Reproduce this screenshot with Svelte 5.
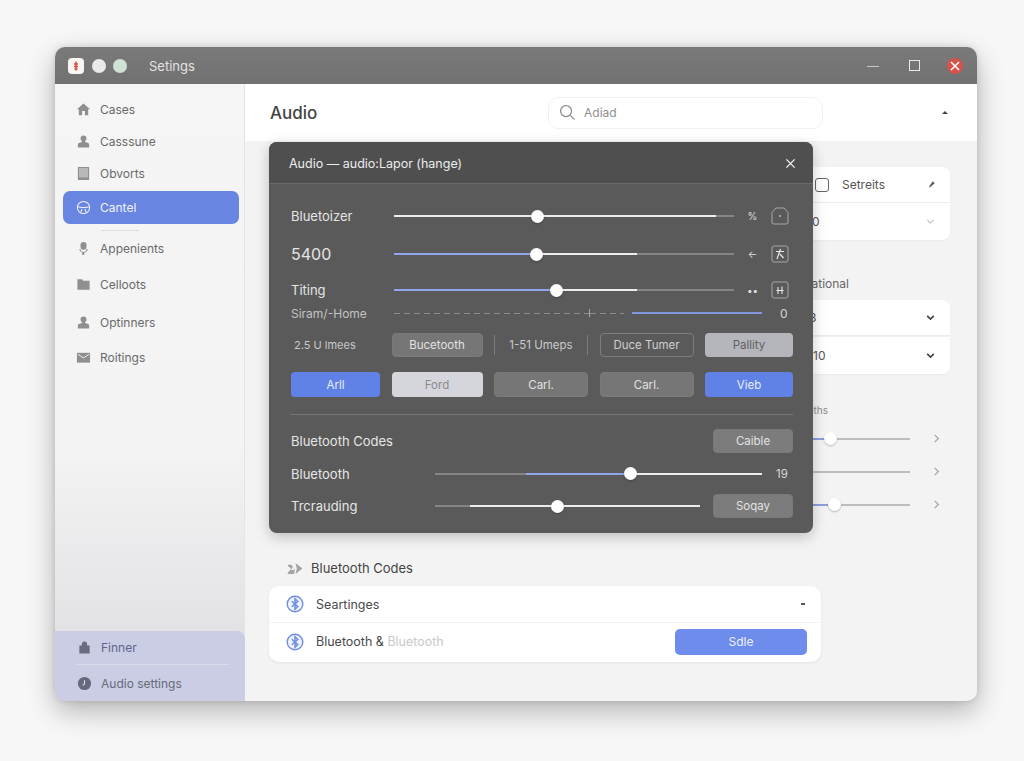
<script>
  const navTop = [
    { label: 'Cases', icon: 'home' },
    { label: 'Casssune', icon: 'user' },
    { label: 'Obvorts', icon: 'book' }
  ];
  const navBottom = [
    { label: 'Appenients', icon: 'mic' },
    { label: 'Celloots', icon: 'folder' },
    { label: 'Optinners', icon: 'user' },
    { label: 'Roitings', icon: 'mail' }
  ];

  const white = '#ececec';
  const grey = '#858585';
  const blue = '#8fa6ea';

  // each track is a list of [width in px, colour]
  const topSliders = [
    { label: 'Bluetoizer', unit: '%', mark: 'arch', segs: [[322, white], [18, grey]], thumb: 143 },
    { label: '5400', big: true, unit: '←', mark: 'slash', segs: [[143, blue], [100, white], [97, grey]], thumb: 142 },
    { label: 'Titing', unit: '••', mark: 'bars', segs: [[162, blue], [81, white], [97, grey]], thumb: 162 }
  ];
  const sideSliders = [
    { segs: [[60, '#8c9fdc'], [80, '#bdbdbd']], thumb: 60 },
    { segs: [[140, '#bdbdbd']] },
    { segs: [[64, '#8c9fdc'], [76, '#bdbdbd']], thumb: 64 }
  ];
</script>

{#snippet slider(segs, thumb)}
  <div class="track">
    {#each segs as seg}
      <span class="seg" style="width: {seg[0]}px; background: {seg[1]};"></span>
    {/each}
    {#if thumb !== undefined}
      <span class="thumb" style="left: {thumb}px;"></span>
    {/if}
  </div>
{/snippet}

{#snippet navIcon(name)}
  <svg class="nav-icon" viewBox="0 0 16 16" fill="currentColor">
    {#if name === 'home'}
      <path d="M8 1.500 1 7.800H3V14h10V7.800h2zM6.500 9.500h3V14h-3z" fill-rule="evenodd" />
    {:else if name === 'user'}
      <path d="M8 1.500a3.200 3.200 0 0 1 3.200 3.200c0 1.200-.6 2.200-1.500 2.800v1l3.300 1.200c.6.2 1 .8 1 1.400V14.500H2v-3.400c0-.6.4-1.200 1-1.400l3.300-1.200v-1c-.9-.6-1.500-1.600-1.500-2.800A3.200 3.200 0 0 1 8 1.500z" />
    {:else if name === 'book'}
      <path d="M2 1h12v14H2zM3.500 2.500V12h9V2.500z" fill-rule="evenodd" />
      <path d="M3.500 2.500h9V12h-9z" opacity=".6" />
    {:else if name === 'mic'}
      <path d="M8 1a3.200 3.200 0 0 1 3.200 3.200v2a3.200 3.200 0 0 1-6.400 0v-2A3.200 3.200 0 0 1 8 1z" />
      <path d="M3.500 8.500h1.400a3.100 3.100 0 0 0 6.200 0h1.400a4.500 4.500 0 0 1-3.700 3.900V15H6.700v-2.600a4.500 4.500 0 0 1-3.200-3.900z" />
    {:else if name === 'folder'}
      <path d="M1.500 2.500h5l1.300 1.500h6.700v9.500h-13z" />
    {:else if name === 'mail'}
      <path d="M1 3h14v10.500H1z" />
      <path d="m2 4.500 6 4 6-4" fill="none" stroke="#f3f3f3" stroke-width="1" />
    {/if}
  </svg>
{/snippet}

{#snippet btIcon()}
  <svg class="bt-icon" viewBox="0 0 18 18" fill="#eef2fc" stroke="#6f8fe0">
    <circle cx="9" cy="9" r="7.800" stroke-width="1.400" />
    <path d="m5.800 6.200 6 5.400L9 14.200V3.800l2.800 2.600-6 5.400" fill="none" stroke-width="1.500" />
  </svg>
{/snippet}

{#snippet markIcon(name)}
  <svg class="mark-icon" viewBox="0 0 18 18" fill="none" stroke="#a8a8a8">
    {#if name === 'arch'}
      <path d="M1 15V5.500L5 1h8l4 4.500V15a2 2 0 0 1-2 2H3a2 2 0 0 1-2-2z" />
      <path d="M8 9h2" stroke="#e6e6e6" />
    {:else if name === 'slash'}
      <rect x="1" y="1" width="16" height="16" rx="2" />
      <path d="M5 6.500h8M9.500 4 6 14M9 9l3.500 4" stroke="#ececec" stroke-width="1.200" />
    {:else}
      <rect x="1" y="1" width="16" height="16" rx="2" />
      <path d="M7 6v7M11 5.500v7.500M5.500 9.500h7" stroke="#ececec" stroke-width="1.100" />
    {/if}
  </svg>
{/snippet}

<div class="window">
  <header class="titlebar">
    <span class="logo">
      <svg viewBox="0 0 16 16" fill="none" stroke="#d8453c" stroke-width="1.300">
        <path d="M8 3.500v9M6 6h4M6 8.500h4M6.500 11h3" />
      </svg>
    </span>
    <span class="dot light"></span>
    <span class="dot green"></span>
    <span class="app-title">Setings</span>
    <span class="win-min"></span>
    <span class="win-max"></span>
    <span class="win-close">
      <svg viewBox="0 0 16 16" stroke="#fff" stroke-width="1.500"><path d="m4 4 8 8M12 4l-8 8" /></svg>
    </span>
  </header>

  <div class="columns">
    <aside class="sidebar">
      <nav class="nav">
        {#each navTop as item}
          <div class="nav-row">{@render navIcon(item.icon)}<span>{item.label}</span></div>
        {/each}
        <div class="nav-row active">
          <svg class="nav-icon" viewBox="0 0 16 16" fill="none" stroke="currentColor" stroke-width="1.100">
            <circle cx="8" cy="8" r="6.500" />
            <path d="M1.800 7c2 1.300 10.400 1.300 12.400 0M5 13.500 6.500 9.500M11 13.500 9.500 9.500" />
          </svg>
          <span>Cantel</span>
        </div>
        <div class="nav-divider"></div>
        {#each navBottom as item}
          <div class="nav-row tall">{@render navIcon(item.icon)}<span>{item.label}</span></div>
        {/each}
      </nav>
      <div class="side-foot">
        <div class="foot-row first">
          <svg class="nav-icon" viewBox="0 0 16 16" fill="#6a6d80">
            <path d="M8 1.500a2.800 2.800 0 0 1 2.800 2.800v1.500h2.700v8.500h-11V5.800h2.700V4.300A2.800 2.800 0 0 1 8 1.500z" />
          </svg>
          <span>Finner</span>
        </div>
        <div class="foot-row">
          <svg class="nav-icon" viewBox="0 0 16 16">
            <circle cx="8" cy="8" r="7" fill="#66697c" />
            <path d="M8 4.500v4L6 10" stroke="#d5d7e6" stroke-width="1.200" fill="none" />
          </svg>
          <span>Audio settings</span>
        </div>
      </div>
    </aside>

    <main class="main">
      <div class="main-head">
        <h1>Audio</h1>
        <div class="search">
          <svg viewBox="0 0 18 18" fill="none" stroke="#8a8a8a" stroke-width="1.300">
            <circle cx="7.500" cy="7.500" r="5.800" /><path d="m12 12 4.500 4.500" />
          </svg>
          <span>Adiad</span>
        </div>
        <span class="caret-up"></span>
      </div>

      <div class="main-body">
        <section class="side-panel">
          <div class="side-card top">
            <span class="check"></span>
            <span class="card-name">Setreits</span>
            <svg class="pin" viewBox="0 0 10 10" fill="#555"><path d="m6.500 1.500 2 2-4.500 4-2 1 1-2z" /></svg>
          </div>
          <div class="side-card mid">
            <span>0</span>
            <svg class="chev faint" viewBox="0 0 10 10" fill="none"><path d="m2 3.500 3 3 3-3" /></svg>
          </div>
          <div class="side-label wide">Operational</div>
          <div class="side-card plain">
            <span>13</span>
            <svg class="chev" viewBox="0 0 10 10" fill="none"><path d="m2 3.500 3 3 3-3" /></svg>
          </div>
          <div class="side-card plain second">
            <span>10</span>
            <svg class="chev" viewBox="0 0 10 10" fill="none"><path d="m2 3.500 3 3 3-3" /></svg>
          </div>
          <div class="side-label">Paths</div>
          {#each sideSliders as row}
            <div class="side-slider">
              {@render slider(row.segs, row.thumb)}
              <svg class="go" viewBox="0 0 10 12" fill="none"><path d="m3 2 4 4-4 4" /></svg>
            </div>
          {/each}
        </section>

        <section class="codes">
          <div class="codes-head">
            <svg viewBox="0 0 18 14" fill="#a3a3a3">
              <path d="M9.500 1 17 7l-7.500 6 1.500-6zM1 3.500C3 2.500 6 3 6.500 5c.3 1.500-1 2.500-2.500 3.500h3.500L9 7l-1 6H1c0-2.500 3-3.500 3.500-6C4.500 6 2 5.500 1 3.500z" />
            </svg>
            <span>Bluetooth Codes</span>
          </div>
          <div class="codes-card">
            <div class="code-row divided">
              {@render btIcon()}
              <span>Seartinges</span>
              <span class="dash"></span>
            </div>
            <div class="code-row">
              {@render btIcon()}
              <span>Bluetooth &amp; <em>Bluetooth</em></span>
              <button class="save">Sdle</button>
            </div>
          </div>
        </section>
      </div>

      <div class="dialog">
        <div class="dialog-head">
          <span>Audio — audio:Lapor (hange)</span>
          <svg viewBox="0 0 12 12" stroke="#f2f2f2" stroke-width="1.400"><path d="m1.500 1.500 9 9M10.500 1.500l-9 9" /></svg>
        </div>
        <div class="dialog-body">
          {#each topSliders as row}
            <div class="s-row">
              <span class="s-label" class:big={row.big}>{row.label}</span>
              {@render slider(row.segs, row.thumb)}
              <span class="s-unit">{row.unit}</span>
              {@render markIcon(row.mark)}
            </div>
          {/each}
          <div class="s-row dashed-row">
            <span class="s-label dim">Siram/-Home</span>
            <span class="dashes long"></span>
            <span class="tick"></span>
            <span class="dashes short"></span>
            <span class="blue-line"></span>
            <span class="zero">0</span>
          </div>

          <div class="btn-grid">
            <span class="cell-text first">2.5 U lmees</span>
            <button class="btn">Bucetooth</button>
            <span class="cell-text seps">1-51 Umeps</span>
            <button class="btn outline">Duce Tumer</button>
            <button class="btn pale">Pallity</button>
            <button class="btn primary">Arll</button>
            <button class="btn light-btn">Ford</button>
            <button class="btn">Carl.</button>
            <button class="btn">Carl.</button>
            <button class="btn primary">Vieb</button>
          </div>

          <div class="rule"></div>

          <div class="code-line">
            <span>Bluetooth Codes</span>
            <button class="btn small">Caible</button>
          </div>
          <div class="code-line slide">
            <span class="l-label">Bluetooth</span>
            {@render slider([[91, grey], [104, blue], [132, white]], 195)}
            <span class="num">19</span>
          </div>
          <div class="code-line slide">
            <span class="l-label">Trcrauding</span>
            {@render slider([[35, grey], [230, white]], 122)}
            <button class="btn small push">Soqay</button>
          </div>
        </div>
      </div>
    </main>
  </div>
</div>

<style>
  :global(body) {
    margin: 0;
    background: #f7f7f7;
    font-family: Inter, 'Liberation Sans', sans-serif;
  }

  button {
    font-family: inherit;
    cursor: pointer;
  }

  .window {
    width: 922px;
    height: 654px;
    margin: 47px 0 60px 55px;
    display: flex;
    flex-direction: column;
    border-radius: 10px;
    overflow: hidden;
    background: #f3f3f3;
    box-shadow: 0 10px 28px rgba(0, 0, 0, 0.28), 0 0 6px rgba(0, 0, 0, 0.12);
  }

  .titlebar {
    height: 37px;
    flex: none;
    display: flex;
    align-items: center;
    padding: 0 14px 0 13px;
    box-sizing: border-box;
    background: linear-gradient(#7a7a7a, #717171);
  }

  .logo {
    width: 16px;
    height: 16px;
    border-radius: 4px;
    background: #f8f5f3;
  }

  .logo svg {
    display: block;
  }

  .dot {
    width: 14px;
    height: 14px;
    border-radius: 50%;
  }

  .dot.light {
    margin-left: 8px;
    background: #e9e9e9;
  }

  .dot.green {
    margin-left: 7px;
    background: #cfe2d3;
  }

  .app-title {
    margin-left: 22px;
    font-size: 13px;
    color: #e2e2e2;
  }

  .win-min {
    margin-left: auto;
    margin-top: 2px;
    width: 12px;
    height: 1px;
    background: #c9c9c9;
  }

  .win-max {
    margin-left: 30px;
    width: 9px;
    height: 9px;
    border: 1px solid #e8e8e8;
  }

  .win-close {
    margin-left: 27px;
    width: 16px;
    height: 16px;
    border-radius: 50%;
    background: #d5534d;
  }

  .win-close svg {
    display: block;
  }

  .columns {
    flex: 1;
    display: flex;
    min-height: 0;
  }

  .sidebar {
    width: 190px;
    flex: none;
    display: flex;
    flex-direction: column;
    box-sizing: border-box;
    border-right: 1px solid #e3e3e3;
    background: linear-gradient(#f5f5f5 0%, #f3f3f3 60%, #dcdce1 100%);
  }

  .nav {
    padding: 9px 5px 0 8px;
    display: flex;
    flex-direction: column;
  }

  .nav-row {
    height: 32px;
    display: flex;
    align-items: center;
    gap: 9px;
    padding-left: 13px;
    font-size: 12px;
    color: #6a6a6a;
  }

  .nav-row.tall {
    height: 36px;
  }

  .nav-row.tall:nth-last-child(2) {
    margin-top: 2px;
  }

  .nav-row.tall:last-child {
    margin-top: -1px;
  }

  .nav-row.active {
    height: 33px;
    margin-top: 2px;
    border-radius: 7px;
    background: #6885e2;
    color: #f1f3fb;
  }

  .nav-icon {
    width: 15px;
    height: 15px;
    flex: none;
    color: #8f8f8f;
  }

  .active .nav-icon {
    color: #f1f3fb;
  }

  .nav-divider {
    height: 1px;
    width: 38px;
    margin: 6px 0 -1px 38px;
    background: #dcdcdc;
  }

  .side-foot {
    margin: auto -1px 0 0;
    height: 70px;
    box-sizing: border-box;
    padding: 0 16px 0 22px;
    border-radius: 0 8px 0 0;
    background: #cacde3;
  }

  .foot-row {
    height: 36px;
    display: flex;
    align-items: center;
    gap: 9px;
    font-size: 12px;
    color: #686a7c;
  }

  .foot-row.first {
    height: 33px;
    border-bottom: 1px solid #dcdeec;
    color: #5f648f;
  }

  .main {
    flex: 1;
    position: relative;
    display: flex;
    flex-direction: column;
    min-width: 0;
  }

  .main-head {
    height: 57px;
    flex: none;
    display: flex;
    align-items: center;
    box-sizing: border-box;
    padding: 0 29px 0 25px;
    background: #fff;
  }

  .main-head h1 {
    margin: 0;
    width: 278px;
    font-size: 17px;
    font-weight: 500;
    color: #444;
  }

  .search {
    width: 275px;
    height: 32px;
    display: flex;
    align-items: center;
    gap: 8px;
    box-sizing: border-box;
    padding-left: 10px;
    border: 1px solid #f1f1f1;
    border-radius: 10px;
    font-size: 12px;
    color: #8f8f8f;
  }

  .search svg {
    width: 17px;
    height: 17px;
  }

  .caret-up {
    margin-left: auto;
    border: 3px solid transparent;
    border-top: 0;
    border-bottom: 3px solid #444;
  }

  .main-body {
    flex: 1;
    display: flex;
    flex-direction: column;
    padding: 26px 27px 0 24px;
    box-sizing: border-box;
  }

  .side-panel {
    width: 180px;
    margin-left: auto;
    height: 391px;
    flex: none;
  }

  .side-card {
    display: flex;
    align-items: center;
    box-sizing: border-box;
    padding: 0 14px 0 42px;
    background: #fff;
    font-size: 12px;
    color: #555;
    box-shadow: 0 1px 2px rgba(0, 0, 0, 0.04);
  }

  .side-card.top {
    height: 35px;
    padding-left: 45px;
    border-radius: 8px 8px 0 0;
    gap: 13px;
  }

  .side-card.mid {
    height: 37px;
    margin-top: 1px;
    border-radius: 0 0 8px 8px;
  }

  .side-card.plain {
    height: 35px;
    padding-left: 34px;
    border-radius: 8px 8px 0 0;
  }

  .side-card.plain.second {
    height: 37px;
    margin-top: 2px;
    padding-left: 43px;
    border-radius: 0 0 8px 8px;
  }

  .check {
    width: 12px;
    height: 12px;
    border: 1.500px solid #666;
    border-radius: 3px;
  }

  .card-name {
    color: #555;
  }

  .pin {
    width: 9px;
    height: 9px;
    margin-left: auto;
  }

  .chev {
    width: 11px;
    height: 11px;
    margin-left: auto;
    stroke: #444;
    stroke-width: 1.500;
  }

  .chev.faint {
    stroke: #c8c8c8;
    stroke-width: 1.200;
  }

  .side-label {
    width: 58px;
    margin-top: 30px;
    text-align: right;
    font-size: 10px;
    color: #8b8b8b;
  }

  .side-label.wide {
    width: 79px;
    margin-top: 36px;
    margin-bottom: 9px;
    font-size: 12px;
    line-height: 15px;
    color: #666;
  }

  .side-slider {
    height: 33px;
    display: flex;
    align-items: center;
  }

  .side-label + .side-slider {
    margin-top: 6px;
  }

  .go {
    width: 9px;
    height: 11px;
    margin-left: 22px;
    stroke: #a6a6a6;
    stroke-width: 1.400;
  }

  .track {
    position: relative;
    display: flex;
    align-items: center;
    flex: none;
  }

  .seg {
    height: 2px;
    display: block;
  }

  .thumb {
    position: absolute;
    top: 50%;
    width: 13px;
    height: 13px;
    margin: -6.500px 0 0 -6.500px;
    border-radius: 50%;
    background: #fff;
    box-shadow: 0 1px 2px rgba(0, 0, 0, 0.25);
  }

  .codes {
    width: 552px;
  }

  .codes-head {
    display: flex;
    align-items: center;
    gap: 7px;
    padding-left: 17px;
    height: 20px;
    font-size: 13px;
    color: #444;
  }

  .codes-head svg {
    width: 18px;
    height: 13px;
  }

  .codes-card {
    margin-top: 8px;
    height: 76px;
    border-radius: 10px;
    background: #fff;
    box-shadow: 0 1px 3px rgba(0, 0, 0, 0.07);
  }

  .code-row {
    height: 37px;
    display: flex;
    align-items: center;
    gap: 12px;
    box-sizing: border-box;
    padding: 0 14px 0 17px;
    font-size: 12.500px;
    color: #4a4a4a;
  }

  .code-row.divided {
    height: 37px;
    border-bottom: 1px solid #f3f3f3;
  }

  .code-row em {
    font-style: normal;
    color: #c9c9c9;
  }

  .bt-icon {
    width: 18px;
    height: 18px;
    flex: none;
  }

  .dash {
    margin-left: auto;
    margin-right: 2px;
    width: 4px;
    height: 1.500px;
    background: #555;
  }

  .save {
    margin-left: auto;
    width: 132px;
    height: 26px;
    border: 0;
    border-radius: 5px;
    background: #6d8ceb;
    color: #eef1fc;
    font-size: 12px;
  }

  .dialog {
    position: absolute;
    left: 24px;
    top: 58px;
    width: 544px;
    height: 391px;
    border-radius: 8px;
    background: #5a5a5a;
    box-shadow: 0 4px 14px rgba(0, 0, 0, 0.22);
    color: #e8e8e8;
    overflow: hidden;
  }

  .dialog-head {
    height: 42px;
    display: flex;
    align-items: center;
    justify-content: space-between;
    box-sizing: border-box;
    padding: 1px 17px 0 20px;
    border-bottom: 1px solid #6a6a6a;
    background: #4f4f4f;
    font-size: 12.500px;
    color: #ececec;
  }

  .dialog-head svg {
    width: 11px;
    height: 11px;
  }

  .dialog-body {
    padding: 20px 20px 0 22px;
  }

  .s-row {
    height: 24px;
    display: flex;
    align-items: center;
    margin-bottom: 13px;
  }

  .s-row:nth-child(1) {
    margin-bottom: 14px;
  }

  .s-row:nth-child(2) {
    margin-bottom: 12px;
  }

  .s-label {
    width: 103px;
    flex: none;
    font-size: 13px;
    color: #e4e4e4;
  }

  .s-label.big {
    font-size: 16px;
  }

  .s-label.dim {
    font-size: 12px;
    color: #c2c2c2;
  }

  .s-unit {
    width: 37px;
    text-align: center;
    font-size: 10px;
    color: #ddd;
  }

  .mark-icon {
    width: 18px;
    height: 18px;
  }

  .s-row.dashed-row {
    height: 16px;
    margin: -10px 0 12px;
  }

  .dashes {
    height: 1px;
    background: repeating-linear-gradient(90deg, #8d8d8d 0 6px, transparent 6px 10px);
  }

  .dashes.long {
    width: 195px;
  }

  .dashes.short {
    width: 34px;
  }

  .tick {
    width: 1px;
    height: 8px;
    background: #a5a5a5;
  }

  .blue-line {
    width: 130px;
    height: 2px;
    margin-left: 8px;
    background: #8198e0;
  }

  .zero {
    margin-left: 18px;
    font-size: 12px;
    color: #d5d5d5;
  }

  .btn-grid {
    display: grid;
    grid-template-columns: 89px 91px 94px 94px 88px;
    grid-template-rows: 24px 25px;
    column-gap: 11.500px;
    row-gap: 15px;
  }

  .cell-text {
    display: flex;
    align-items: center;
    justify-content: center;
    font-size: 11.500px;
    color: #c9c9c9;
  }

  .cell-text.first {
    justify-content: flex-start;
    padding-left: 3px;
    font-size: 11px;
  }

  .cell-text.seps {
    border-left: 1px solid #7c7c7c;
    border-right: 1px solid #7c7c7c;
    margin: 2px 0;
  }

  .btn {
    border: 1px solid #797979;
    border-radius: 4px;
    background: #767676;
    color: #e2e2e2;
    font-size: 11.500px;
    padding: 0;
  }

  .btn.outline {
    background: transparent;
    border-color: #7e7e7e;
    color: #cfcfcf;
  }

  .btn.pale {
    border: 0;
    background: #b5b6bb;
    color: #5f5f5f;
  }

  .btn.primary {
    border: 0;
    background: #6082e6;
    color: #e8edfb;
  }

  .btn.light-btn {
    border: 0;
    background: #d4d6dc;
    color: #8b8b8b;
  }

  .rule {
    height: 1px;
    margin: 17px 0 14px -1px;
    background: #757575;
  }

  .code-line {
    height: 24px;
    display: flex;
    align-items: center;
    justify-content: space-between;
    font-size: 13px;
    color: #e6e6e6;
  }

  .code-line.slide {
    justify-content: flex-start;
    margin-top: 8.500px;
  }

  .l-label {
    width: 144px;
    flex: none;
  }

  .num {
    margin-left: 14px;
    font-size: 11.500px;
    color: #d8d8d8;
  }

  .btn.small {
    width: 80px;
    height: 24px;
    background: #7c7c7c;
  }

  .btn.push {
    margin-left: auto;
  }
</style>
